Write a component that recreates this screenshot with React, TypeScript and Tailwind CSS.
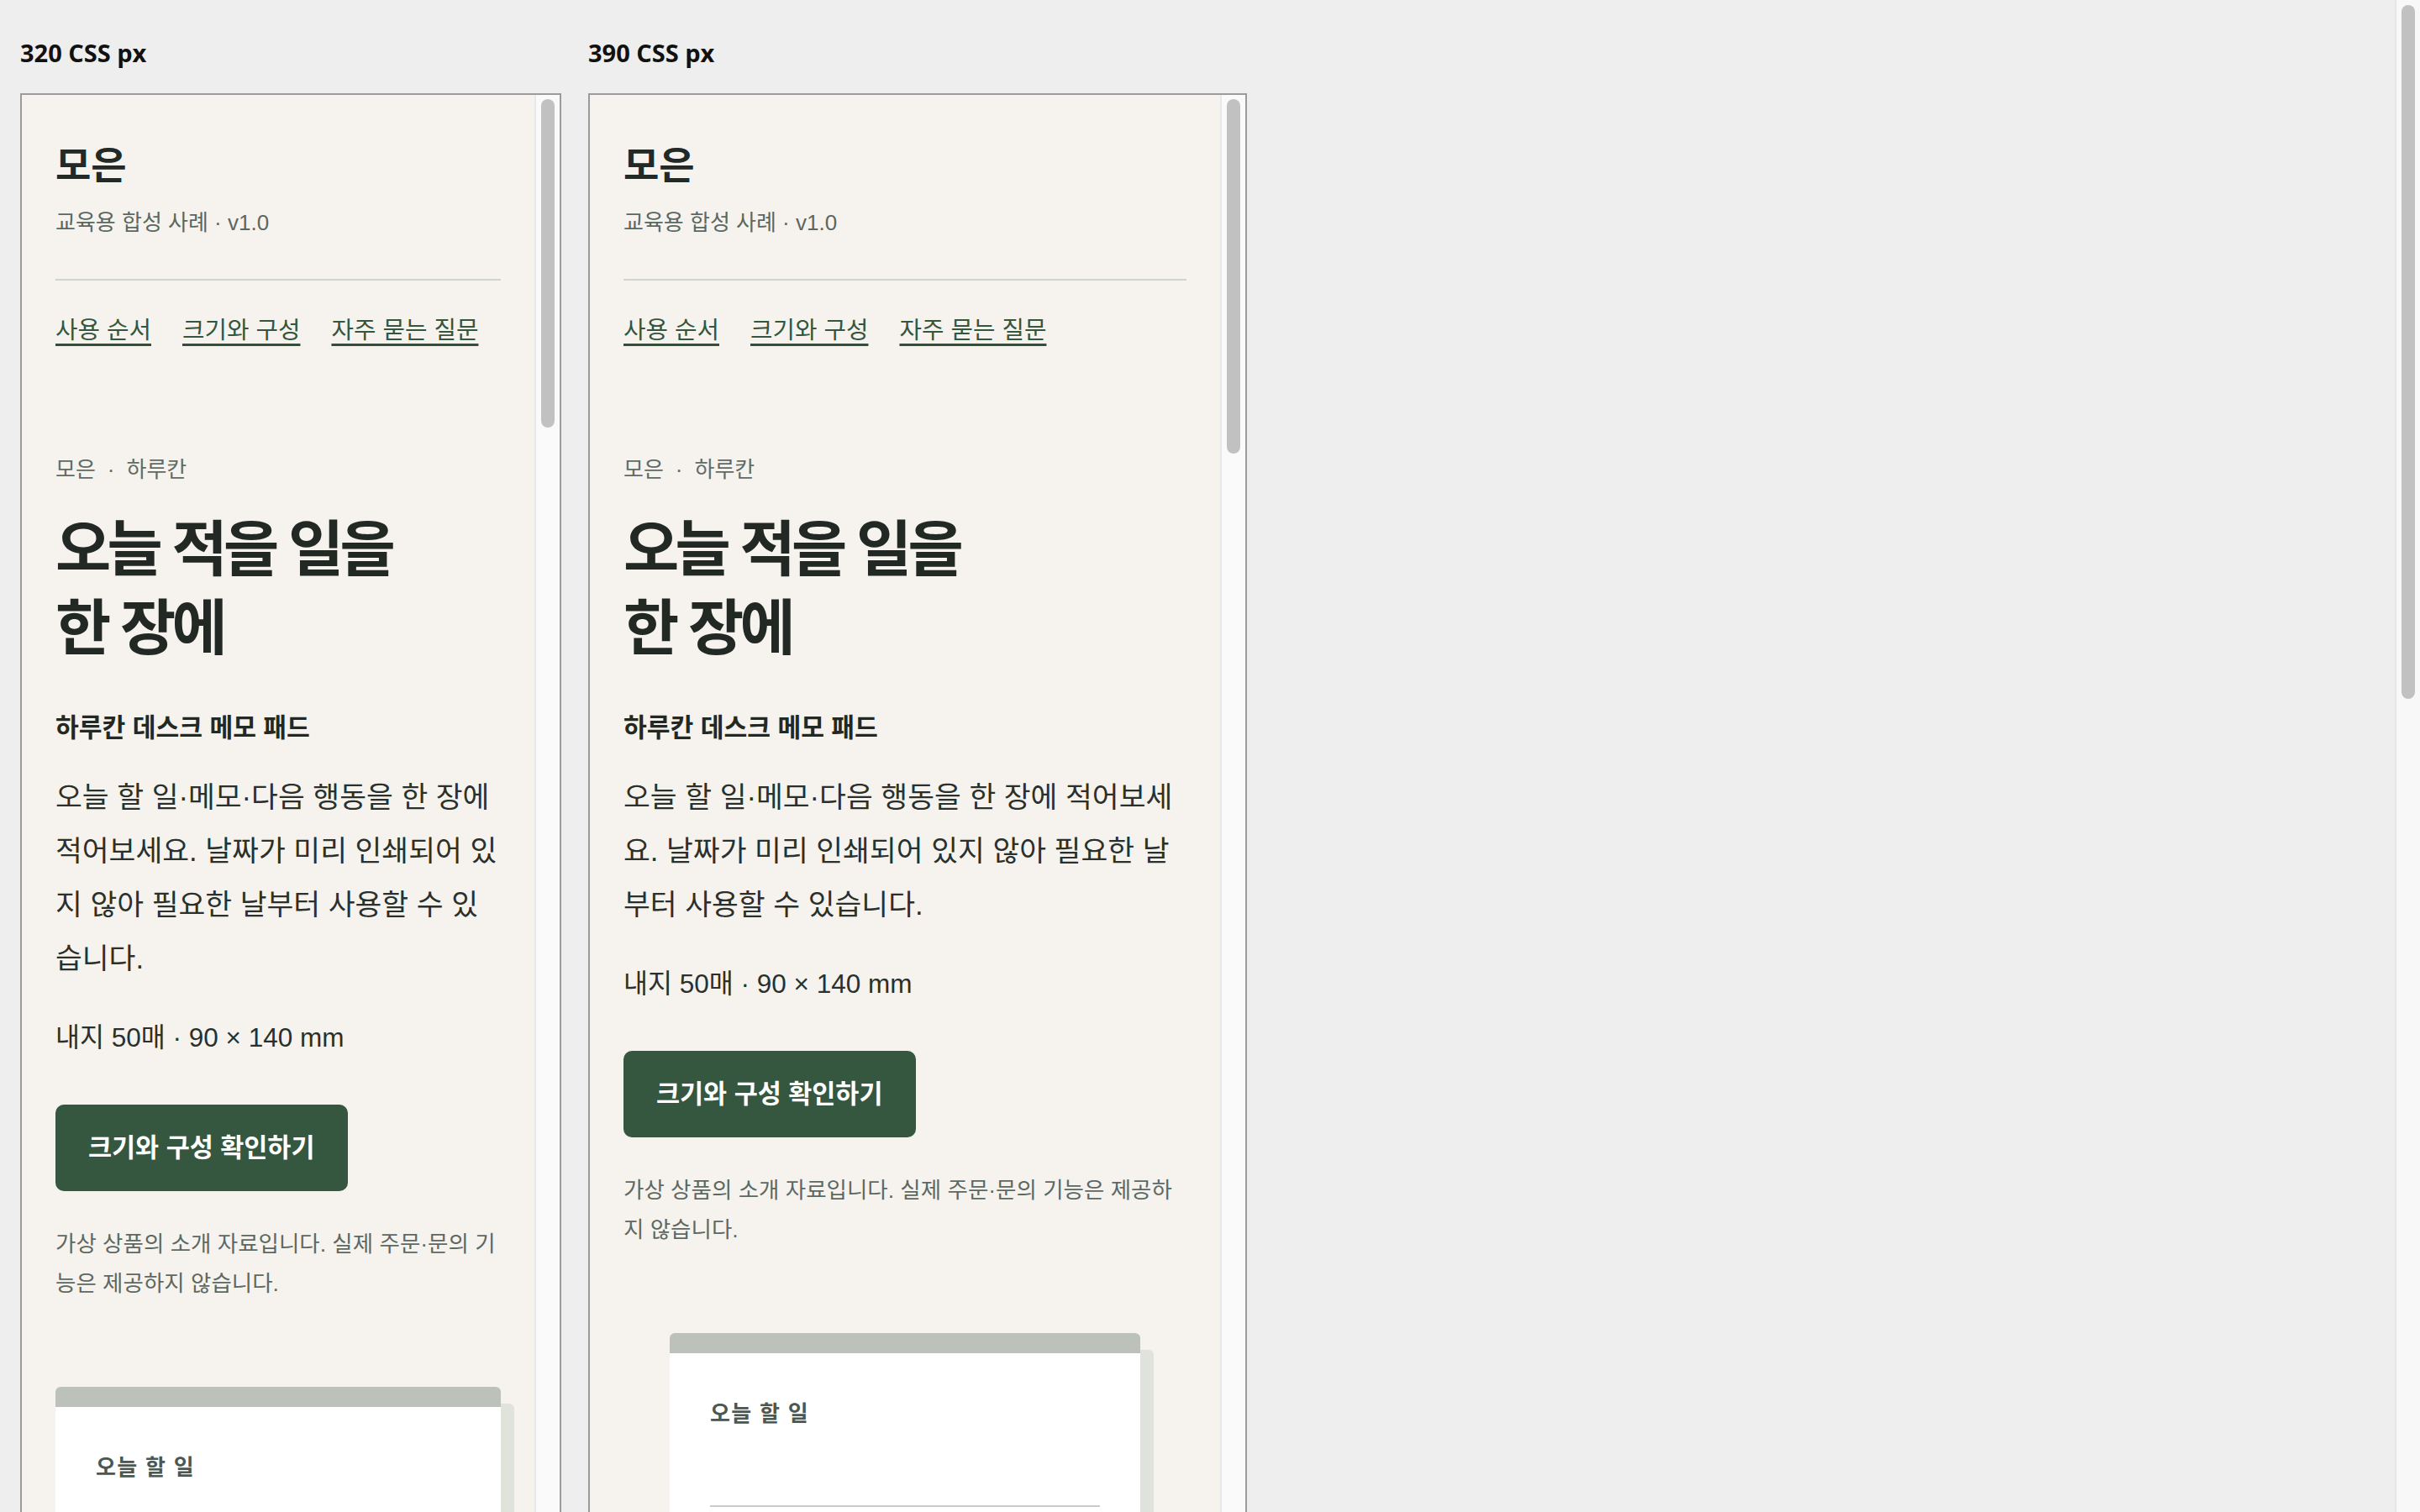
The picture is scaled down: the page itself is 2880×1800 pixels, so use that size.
import clsx from 'clsx';

// Two phone-width previews of the same landing page, drawn at 2x.
const KO = "font-['Liberation_Sans','Noto_Sans_CJK_KR',sans-serif]";

function LandingPage() {
  return (
    <div className={clsx(KO, 'pt-[56px] text-[#232a26]')}>
      {/* Header */}
      <div className="text-[46px] leading-[56px] font-bold">모은</div>
      <div className="mt-[22px] text-[26px] leading-[36px] text-[#5b6761]">교육용 합성 사례 · v1.0</div>
      <div className="mt-[49px] h-[2px] bg-[#cfd3cd]" />
      <nav className="mt-[41px] flex gap-[37px] text-[28.8px] leading-[36px] text-[#34553e]">
        <a className="underline decoration-[#2f5138] decoration-[3px] underline-offset-[6px]">사용 순서</a>
        <a className="underline decoration-[#2f5138] decoration-[3px] underline-offset-[6px]">크기와 구성</a>
        <a className="underline decoration-[#2f5138] decoration-[3px] underline-offset-[6px]">자주 묻는 질문</a>
      </nav>

      {/* Hero */}
      <p className="mt-[132px] text-[26px] leading-[32px] text-[#5f6b64]">
        모은<span className="mx-[14px]">·</span>하루칸
      </p>
      <h1 className="mt-[32px] text-[72px] leading-[94px] font-bold tracking-[-0.065em] text-[#222925]">
        오늘 적을 일을
        <br />
        한 장에
      </h1>
      <h2 className="mt-[52px] text-[30.2px] leading-[40px] font-bold text-[#222925]">하루칸 데스크 메모 패드</h2>
      <p className="mt-[30px] text-[34.6px] leading-[64px] text-[#2a302c]">
        오늘 할 일·메모·다음 행동을 한 장에 적어보세요. 날짜가 미리 인쇄되어 있지 않아 필요한 날부터 사용할 수 있습니다.
      </p>
      <p className="mt-[42px] text-[31.5px] leading-[40px] text-[#2a302c]">내지 50매 · 90 × 140 mm</p>
      <button className="mt-[60px] flex h-[103px] items-center rounded-[10px] bg-[#35573f] px-[39px] text-[30.5px] font-bold text-white">
        크기와 구성 확인하기
      </button>
      <p className="mt-[40px] text-[26.5px] leading-[47px] text-[#5d6862]">
        가상 상품의 소개 자료입니다. 실제 주문·문의 기능은 제공하지 않습니다.
      </p>

      {/* Memo pad preview */}
      <div className="mx-auto mt-[99px] max-w-[560px] rounded-[6px] bg-white shadow-[16px_20px_0_#e0e2dc]">
        <div className="h-[24px] rounded-t-[6px] bg-[#bcc1bc]" />
        <div className="px-[48px] pt-[56px] pb-[80px]">
          <div className="text-[26px] leading-[32px] font-bold tracking-[0.05em] text-[#4b5751]">오늘 할 일</div>
          <div className="mt-[93px] h-[2px] bg-[#c9ccc8]" />
          <div className="mt-[86px] h-[2px] bg-[#c9ccc8]" />
          <div className="mt-[86px] h-[2px] bg-[#c9ccc8]" />
        </div>
      </div>
    </div>
  );
}

function Preview({ label, narrow }: { label: string; narrow: boolean }) {
  return (
    <section className="flex shrink-0 flex-col">
      <div className="mb-[29px] font-['Open_Sans',sans-serif] text-[29px] leading-[38px] font-bold text-[#111111]">
        {label}
      </div>
      <div
        className={clsx(
          'flex h-[1700px] border-2 border-[#9b9b9b] bg-[#f6f3ee]',
          narrow ? 'w-[644px]' : 'w-[784px]'
        )}
      >
        <div className={clsx('shrink-0 px-[40px]', narrow ? 'w-[610px]' : 'w-[750px]')}>
          <LandingPage />
        </div>
        {/* frame scrollbar */}
        <div className="w-[30px] shrink-0 border-l-2 border-[#e8e8e8] bg-[#fafafa] pt-[5px]">
          <div className={clsx('mx-auto w-[16px] rounded-full bg-[#c1c1c1]', narrow ? 'h-[391px]' : 'h-[422px]')} />
        </div>
      </div>
    </section>
  );
}

export default function App() {
  return (
    <div className="flex h-screen w-full overflow-hidden bg-[#eeeeee]">
      <main className="flex flex-1 items-start gap-[32px] pt-[44px] pl-[24px]">
        <Preview label="320 CSS px" narrow />
        <Preview label="390 CSS px" narrow={false} />
      </main>
      {/* page scrollbar */}
      <div className="w-[30px] shrink-0 border-l-2 border-[#e6e6e6] bg-[#f8f8f8] pt-[6px]">
        <div className="mx-auto h-[826px] w-[16px] rounded-full bg-[#c1c1c1]" />
      </div>
    </div>
  );
}
